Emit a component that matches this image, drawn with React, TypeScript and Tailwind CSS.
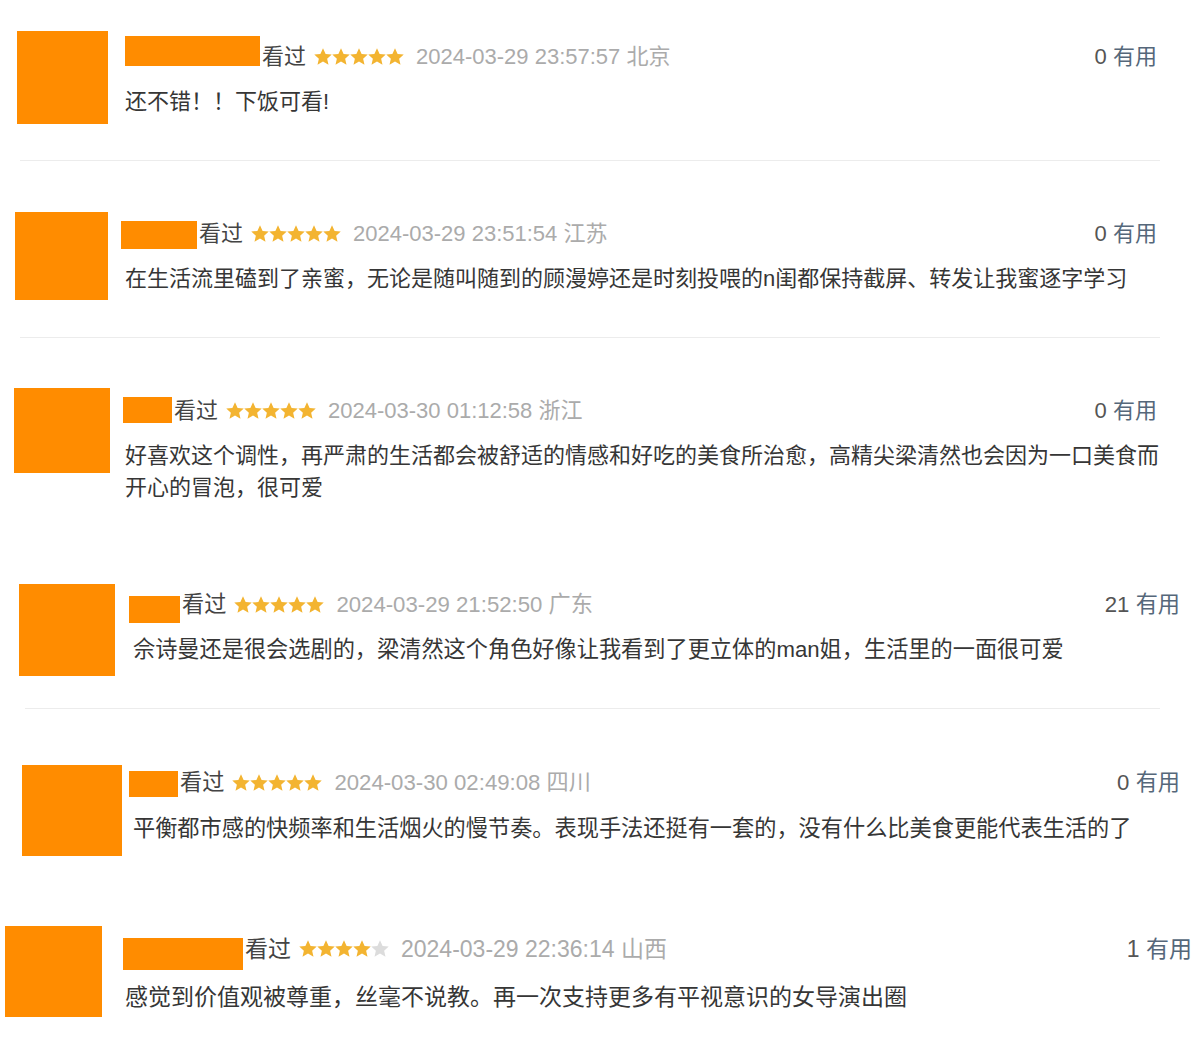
const FONT = { fontFamily: '"Liberation Sans", "Noto Sans CJK SC", Arial, sans-serif' };

type Review = {
  h: string;
  size: string;
  avatar: string;
  col: string;
  nameBox: string;
  text: string;
  lines: string[];
  lineGap: string;
  rating: number;
  time: string;
  place: string;
  useful: number;
  sep?: string;
};

const reviews: Review[] = [
  {
    h: "h-[180px]",
    size: "text-[22px]",
    avatar: "ml-[17px] mt-[31px] w-[91px] h-[93px]",
    col: "ml-[17px] mt-[36px] w-[1032px]",
    nameBox: "w-[135px] h-[30px]",
    text: "mt-[6px]",
    lines: ["还不错！！下饭可看!"],
    lineGap: "mt-[14px] ml-0",
    rating: 5,
    time: "2024-03-29 23:57:57",
    place: "北京",
    useful: 0,
    sep: "ml-[20px] w-[1140px] mb-[19px]",
  },
  {
    h: "h-[170px]",
    size: "text-[22px]",
    avatar: "ml-[15px] mt-[32px] w-[93px] h-[88px]",
    col: "ml-[13px] mt-[39px] w-[1036px]",
    nameBox: "w-[76px] h-[28px] mt-[2px]",
    text: "mt-0",
    lines: ["在生活流里磕到了亲蜜，无论是随叫随到的顾漫婷还是时刻投喂的n闺都保持截屏、转发让我蜜逐字学习"],
    lineGap: "mt-[14px] ml-[4px]",
    rating: 5,
    time: "2024-03-29 23:51:54",
    place: "江苏",
    useful: 0,
    sep: "ml-[20px] w-[1140px] mb-[12px]",
  },
  {
    h: "h-[200px]",
    size: "text-[22px]",
    avatar: "ml-[14px] mt-[38px] w-[96px] h-[85px]",
    col: "ml-[13px] mt-[46px] w-[1034px]",
    nameBox: "w-[49px] h-[26px] mt-[1px]",
    text: "mt-0",
    lines: [
      "好喜欢这个调性，再严肃的生活都会被舒适的情感和好吃的美食所治愈，高精尖梁清然也会因为一口美食而",
      "开心的冒泡，很可爱",
    ],
    lineGap: "mt-[14px] ml-[2px]",
    rating: 5,
    time: "2024-03-30 01:12:58",
    place: "浙江",
    useful: 0,
  },
  {
    h: "h-[170px]",
    size: "text-[22.2px]",
    avatar: "ml-[19px] mt-[34px] w-[96px] h-[92px]",
    col: "ml-[14px] mt-[40px] w-[1051px]",
    nameBox: "w-[51px] h-[27px] mt-[6px]",
    text: "mt-0",
    lines: ["佘诗曼还是很会选剧的，梁清然这个角色好像让我看到了更立体的man姐，生活里的一面很可爱"],
    lineGap: "mt-[11px] ml-[4px]",
    rating: 5,
    time: "2024-03-29 21:52:50",
    place: "广东",
    useful: 21,
    sep: "ml-[25px] w-[1135px] mb-[11px]",
  },
  {
    h: "h-[170px]",
    size: "text-[22.2px]",
    avatar: "ml-[22px] mt-[45px] w-[100px] h-[91px]",
    col: "ml-[7px] mt-[48px] w-[1051px]",
    nameBox: "w-[49px] h-[26px] mt-[3px]",
    text: "mt-0",
    lines: ["平衡都市感的快频率和生活烟火的慢节奏。表现手法还挺有一套的，没有什么比美食更能代表生活的了"],
    lineGap: "mt-[15px] ml-[4px]",
    rating: 5,
    time: "2024-03-30 02:49:08",
    place: "四川",
    useful: 0,
  },
  {
    h: "h-[160px]",
    size: "text-[23px]",
    avatar: "ml-[5px] mt-[36px] w-[97px] h-[91px]",
    col: "ml-[21px] mt-[44px] w-[1069px]",
    nameBox: "w-[120px] h-[32px] mt-[4px]",
    text: "mt-0",
    lines: ["感觉到价值观被尊重，丝毫不说教。再一次支持更多有平视意识的女导演出圈"],
    lineGap: "mt-[11px] ml-[2px]",
    rating: 4,
    time: "2024-03-29 22:36:14",
    place: "山西",
    useful: 1,
  },
];

function Stars({ n }: { n: number }) {
  return (
    <span className="flex items-center">
      {[0, 1, 2, 3, 4].map((i) => (
        <svg key={i} width="18" height="18" viewBox="2 2.2 20 20">
          <path
            d="M12 2.5l2.9 6.3 6.8.7-5.1 4.6 1.5 6.7L12 17.3l-6.1 3.5 1.5-6.7-5.1-4.6 6.8-.7z"
            fill={i < n ? "#f3b431" : "#dcdcdc"}
          />
        </svg>
      ))}
    </span>
  );
}

function Row({ r }: { r: Review }) {
  return (
    <div className={`flex flex-col ${r.h} ${r.size}`}>
      <div className="flex items-start">
        <div className={`shrink-0 bg-[#ff8c00] ${r.avatar}`} />
        <div className={`flex flex-col ${r.col}`}>
          <div className="flex items-start">
            <div className={`shrink-0 bg-[#ff8c00] ${r.nameBox}`} />
            <div className={`flex items-center h-[30px] ${r.text}`}>
              <span className="ml-[2px] leading-[30px] text-[#444]">看过</span>
              <span className="ml-[8px]">
                <Stars n={r.rating} />
              </span>
              <span className="ml-[12px] leading-[30px] text-[#ababab]">
                {r.time} {r.place}
              </span>
            </div>
            <div className={`ml-auto h-[30px] leading-[30px] ${r.text}`}>
              <span className="text-[#555]">{r.useful}</span>{" "}
              <span className="text-[#55677a]">有用</span>
            </div>
          </div>
          <div className={`leading-[32px] text-[#363636] whitespace-nowrap ${r.lineGap}`}>
            {r.lines.map((l, i) => (
              <div key={i}>{l}</div>
            ))}
          </div>
        </div>
      </div>
      {r.sep && <div className={`mt-auto h-px bg-[#ececec] ${r.sep}`} />}
    </div>
  );
}

export default function App() {
  return (
    <div className="w-[1200px] h-[1050px] bg-white overflow-hidden" style={FONT}>
      {reviews.map((r, i) => (
        <Row key={i} r={r} />
      ))}
    </div>
  );
}
